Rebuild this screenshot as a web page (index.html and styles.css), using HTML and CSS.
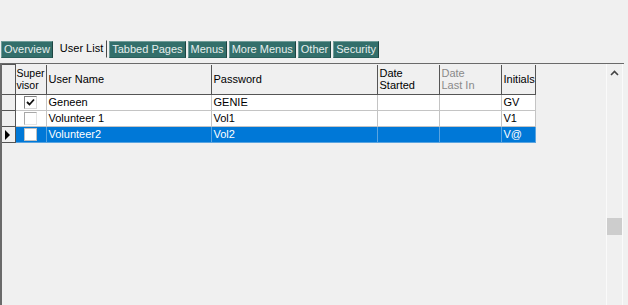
FILE: index.html
```html
<!DOCTYPE html>
<html lang="en">
<head>
    <meta charset="UTF-8">
    <title>User List</title>
    <link rel="stylesheet" href="styles.css">
</head>
<body>

    <!-- Pestañas -->
    <div class="tabs">
        <div class="tab">Overview</div>
        <div class="tab active">User List</div>
        <div class="tab">Tabbed Pages</div>
        <div class="tab">Menus</div>
        <div class="tab">More Menus</div>
        <div class="tab">Other</div>
        <div class="tab">Security</div>
    </div>

    <!-- Rejilla de usuarios -->
    <div class="grid">
        <table class="users">
            <colgroup>
                <col class="c-ind">
                <col class="c-sup">
                <col class="c-name">
                <col class="c-pass">
                <col class="c-date">
                <col class="c-date">
                <col class="c-init">
            </colgroup>
            <thead>
                <tr>
                    <th class="ind"></th>
                    <th class="sup">Super<br>visor</th>
                    <th>User Name</th>
                    <th>Password</th>
                    <th>Date<br>Started</th>
                    <th class="disabled">Date<br>Last In</th>
                    <th>Initials</th>
                </tr>
            </thead>
            <tbody>
                <tr>
                    <td class="ind"></td>
                    <td class="chk">
                        <span class="box checked">
                            <svg width="9" height="9" viewBox="0 0 9 9"><path d="M1 4 L3.5 6.5 L8 1.5" fill="none" stroke="#111" stroke-width="1.8"/></svg>
                        </span>
                    </td>
                    <td>Geneen</td>
                    <td>GENIE</td>
                    <td></td>
                    <td></td>
                    <td>GV</td>
                </tr>
                <tr>
                    <td class="ind"></td>
                    <td class="chk"><span class="box light"></span></td>
                    <td>Volunteer 1</td>
                    <td>Vol1</td>
                    <td></td>
                    <td></td>
                    <td>V1</td>
                </tr>
                <tr class="selected">
                    <td class="ind"><span class="arrow"></span></td>
                    <td class="chk"><span class="box white"></span></td>
                    <td>Volunteer2</td>
                    <td>Vol2</td>
                    <td></td>
                    <td></td>
                    <td>V@</td>
                </tr>
            </tbody>
        </table>

        <div class="scrollbar">
            <svg class="up" width="9" height="6" viewBox="0 0 9 6">
                <path d="M1 5 L4.5 1.5 L8 5" fill="none" stroke="#444" stroke-width="1.6"/>
            </svg>
            <div class="thumb"></div>
        </div>
    </div>

</body>
</html>
```

FILE: styles.css
```css
body {
    font-family: "Liberation Sans", Arial, sans-serif;
    font-size: 11px;
    background-color: #f0f0f0;
    margin: 0;
    padding: 0;
    height: 305px;
    overflow: hidden;
}

.tabs {
    display: flex;
    gap: 2px;
    margin-top: 41px;
    padding-left: 1px;
    height: 17px;
}

.tab {
    background-color: #336f6b;
    color: #e6eeed;
    padding: 0 2px;
    line-height: 15px;
    border-top: 1px solid #6f9c98;
    border-left: 1px solid #6f9c98;
    border-right: 1px solid #1d4441;
    border-bottom: 1px solid #2a5f5b;
    font-size: 11px;
}

.tab.active {
    background-color: transparent;
    color: #000;
    border-color: transparent;
    border-right: 1px solid #4a4a4a;
    padding: 0 3px 0 4px;
    line-height: 14px;
    margin-top: -1px;
}

.grid {
    display: flex;
    justify-content: space-between;
    margin-top: 5px;
    width: 624px;
    height: 242px;
    border-top: 1px solid #6a6a6a;
    border-left: 2px solid #6a6a6a;
    box-sizing: border-box;
}

.users {
    border-collapse: collapse;
    table-layout: fixed;
    width: 533px;
    align-self: flex-start;
}

.c-ind { width: 13px; }
.c-sup { width: 31px; }
.c-name { width: 165px; }
.c-pass { width: 166px; }
.c-date { width: 62px; }
.c-init { width: 34px; }

th {
    height: 29px;
    padding: 0 2px;
    text-align: left;
    font-weight: normal;
    line-height: 12px;
    color: #000;
    background-color: #f0f0f0;
    border: 1px solid #555;
    border-top: none;
    vertical-align: middle;
}

th.sup {
    padding: 0 1px;
    font-size: 10.5px;
}

th.disabled {
    color: #8a8a8a;
}

td {
    height: 15px;
    padding: 0 2px;
    line-height: 15px;
    background-color: #fff;
    border: 1px solid #c4c4c4;
    white-space: nowrap;
    overflow: hidden;
}

td.ind, th.ind {
    background-color: #f0f0f0;
    border: 1px solid #555;
    padding: 0;
    border-left: none;
}

td.chk {
    text-align: center;
    padding: 0;
    line-height: 0;
}

.box {
    display: inline-block;
    width: 13px;
    height: 13px;
    vertical-align: middle;
    box-sizing: border-box;
    background-color: #fff;
}

.box svg {
    display: block;
    margin: 1px 0 0 1px;
}

.box.checked {
    border-top: 1px solid #808080;
    border-left: 1px solid #808080;
    border-right: 1px solid #d8d8d8;
    border-bottom: 1px solid #d8d8d8;
}

.box.light {
    border-top: 1px solid #a8a8a8;
    border-left: 1px solid #a8a8a8;
    border-right: 1px solid #e4e4e4;
    border-bottom: 1px solid #e4e4e4;
}

.box.white {
    border: 1px solid #c0c0c0;
}

.selected td {
    background-color: #0078d7;
    color: #fff;
    border-color: #5aa4e0;
}

.selected td.ind {
    background-color: #f0f0f0;
    border-color: #555;
}

.arrow {
    display: inline-block;
    width: 0;
    height: 0;
    margin-left: 3px;
    border-top: 5px solid transparent;
    border-bottom: 5px solid transparent;
    border-left: 5px solid #000;
    vertical-align: middle;
}

.scrollbar {
    width: 15px;
    margin-right: 1px;
    background-color: #f0f0f0;
    border-left: 1px solid #fafafa;
    border-right: 1px solid #fafafa;
    position: relative;
}

.up {
    display: block;
    margin: 6px auto 0;
}

.thumb {
    position: absolute;
    left: 0;
    right: 0;
    top: 154px;
    height: 17px;
    background-color: #cdcdcd;
}
```
